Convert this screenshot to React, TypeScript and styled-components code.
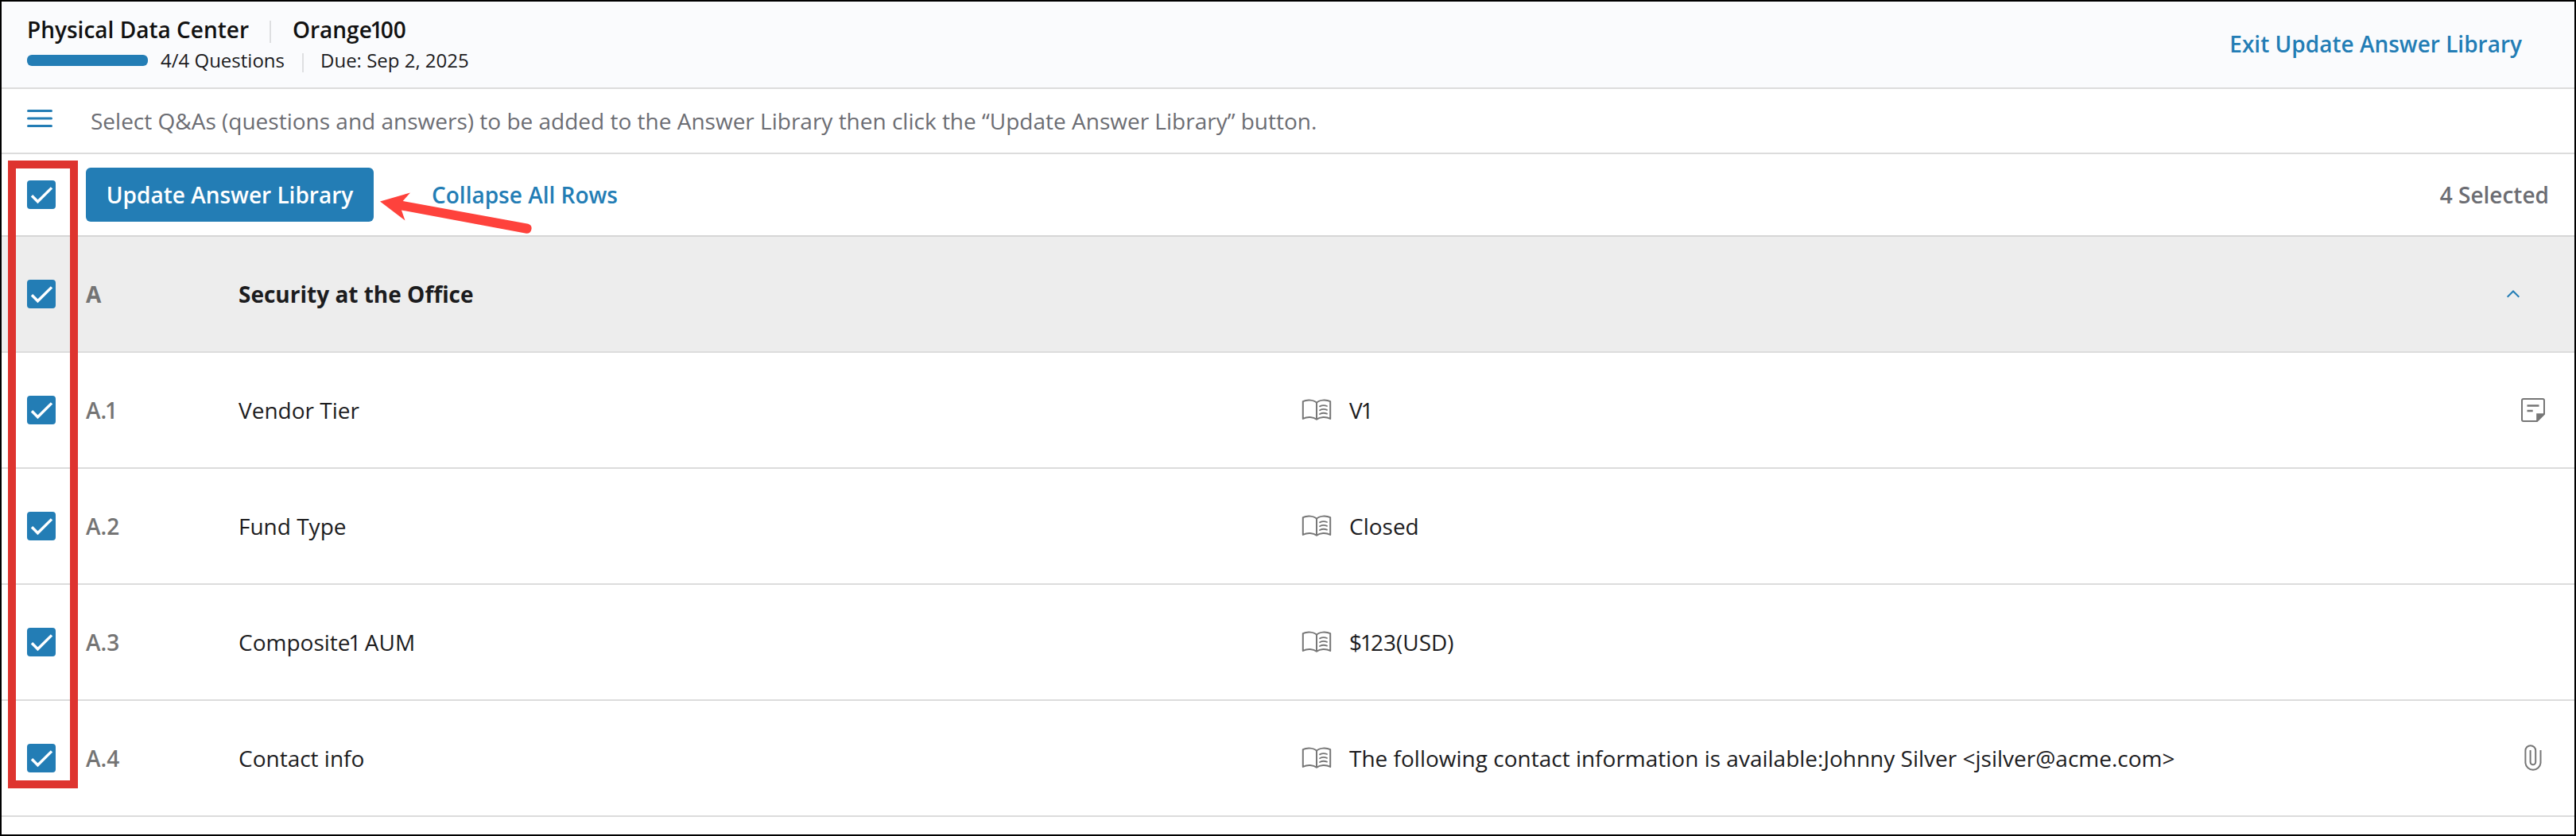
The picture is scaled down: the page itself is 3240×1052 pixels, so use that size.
import React from 'react';
import styled, { createGlobalStyle } from 'styled-components';

const BLUE = '#237db5';
const LINE = '#dcdcdc';

const GlobalStyle = createGlobalStyle`
  * { box-sizing: border-box; }
  body { margin: 0; background: #fff; }
`;

const Page = styled.div`
  position: relative;
  display: flex;
  flex-direction: column;
  width: 3240px;
  height: 1052px;
  overflow: hidden;
  border: 2px solid #000;
  background: #fff;
  color: #1c1c1e;
  font-family: 'Open Sans', 'Noto Sans', sans-serif;
  font-size: 28px;
  line-height: 38px;
  white-space: nowrap;
`;

const Header = styled.header`
  display: flex;
  justify-content: space-between;
  height: 110px;
  padding: 14px 66px 0 32px;
  border-bottom: 2px solid ${LINE};
  background: #fafbfd;
`;

const HeaderLine = styled.div<{ $size: number; $height: number }>`
  display: flex;
  align-items: center;
  height: ${(p) => p.$height}px;
  font-size: ${(p) => p.$size}px;
`;

const Title = styled.span`
  color: #111;
  font-weight: 600;
`;

const Divider = styled.span<{ $height: number; $left: number; $right: number }>`
  width: 2px;
  height: ${(p) => p.$height}px;
  margin: 5px ${(p) => p.$right}px 0 ${(p) => p.$left}px;
  background: #dedfe1;
`;

const Progress = styled.div`
  width: 152px;
  height: 14px;
  margin-right: 16px;
  border-radius: 6px;
  background: ${BLUE};
`;

const TextLink = styled.a`
  color: ${BLUE};
  font-weight: 600;
`;

const ExitLink = styled(TextLink)`
  margin-top: 20px;
`;

const HintBar = styled.div`
  display: flex;
  height: 82px;
  padding: 0 32px;
  border-bottom: 2px solid ${LINE};
  color: #6c6d73;
`;

const MenuIcon = styled.svg`
  margin: 25px 48px 0 0;
`;

const Hint = styled.p`
  margin: 21px 0 0;
`;

const Toolbar = styled.div`
  display: flex;
  align-items: center;
  height: 104px;
  padding: 0 32px;
  border-bottom: 2px solid #d6d6d6;
`;

const Box = styled.span`
  display: flex;
  flex: none;
  align-items: center;
  justify-content: center;
  width: 36px;
  height: 36px;
  margin-right: 38px;
  border-radius: 4px;
  background: ${BLUE};
`;

const PrimaryButton = styled.button`
  width: 362px;
  height: 68px;
  margin-right: 73px;
  padding: 0;
  border: 0;
  border-radius: 6px;
  background: ${BLUE};
  color: #fff;
  font: inherit;
  font-weight: 600;
`;

const Count = styled.span`
  margin-left: auto;
  color: #6c6d73;
  font-weight: 600;
`;

const Row = styled.div<{ $section?: boolean }>`
  display: grid;
  grid-template-columns: 74px 192px 1337px 1fr auto;
  align-items: center;
  height: 146px;
  padding: 0 ${(p) => (p.$section ? 69 : 37)}px 0 32px;
  border-bottom: 2px solid ${LINE};
  background: ${(p) => (p.$section ? '#ededed' : '#fff')};
  font-weight: ${(p) => (p.$section ? 700 : 400)};
`;

const Code = styled.span<{ $bold?: boolean }>`
  color: #747474;
  font-weight: ${(p) => (p.$bold ? 700 : 600)};
`;

const Answer = styled.span`
  display: flex;
  align-items: center;
  gap: 22px;
`;

/* The digit one is set with tight side bearings. */
const TightOne = styled.span`
  margin: 0 -0.1em 0 -0.08em;
`;

const Highlight = styled.div`
  position: absolute;
  left: 8px;
  top: 200px;
  width: 88px;
  height: 790px;
  border: 10px solid #de342f;
`;

const Pointer = styled.svg`
  position: absolute;
  left: 476px;
  top: 238px;
`;

const Tight = ({ text }: { text: string }) => (
  <span>
    {text.split(/(1)/).map((part, i) => (part === '1' ? <TightOne key={i}>1</TightOne> : part))}
  </span>
);

const Checkbox = () => (
  <Box role="checkbox" aria-checked="true">
    <svg width="36" height="36" viewBox="0 0 36 36" fill="none">
      <path d="M6 19.2L13.5 26.8L31 9.4" stroke="#fff" strokeWidth="3.4" />
    </svg>
  </Box>
);

const BookIcon = () => (
  <svg width="38" height="28" viewBox="0 0 38 28" fill="none" stroke="#767676" strokeWidth="2" strokeLinejoin="round" strokeLinecap="round">
    <path d="M19 5C16 1 7 0.6 1.8 3.2V25C7 22 15 22.4 19 25.8C23 22.4 31 22 36.2 25V3.2C31 0.6 22 1 19 5ZM19 5V25.6" />
    <path d="M23 9.4C26 7.8 29 7.8 32 9M23 14.2C26 12.6 29 12.6 32 13.8M23 19C26 17.4 29 17.4 32 18.6" strokeWidth="1.8" />
  </svg>
);

const NoteIcon = () => (
  <svg width="30" height="30" viewBox="0 0 30 30" fill="none">
    <path d="M3 1H27Q29 1 29 3V20L20 29H3Q1 29 1 27V3Q1 1 3 1Z" stroke="#767676" strokeWidth="2" />
    <path d="M19.2 19.2H29.5L19.2 29.5Z" fill="#767676" />
    <path d="M7.5 9.5H22.5M7.5 16H14.7" stroke="#767676" strokeWidth="2.4" />
  </svg>
);

const ClipWrap = styled.svg`
  margin-right: 4px;
`;

const ClipIcon = () => (
  <ClipWrap width="22" height="34" viewBox="0 0 22 34" fill="none" stroke="#767676" strokeWidth="2">
    <path d="M20.5 7V23.2A9.6 9.6 0 0 1 1.4 23.2V7.6A6.4 6.4 0 0 1 14.2 7.6V22A3.3 3.3 0 0 1 7.6 22V7" />
  </ClipWrap>
);

const Chevron = () => (
  <svg width="16" height="10" viewBox="0 0 16 10" fill="none">
    <path d="M0.7 8.7L8 1.5L15.3 8.7" stroke={BLUE} strokeWidth="2" />
  </svg>
);

const rows = [
  { code: 'A.1', question: 'Vendor Tier', answer: 'V1', icon: <NoteIcon /> },
  { code: 'A.2', question: 'Fund Type', answer: 'Closed' },
  { code: 'A.3', question: 'Composite1 AUM', answer: '$123(USD)' },
  {
    code: 'A.4',
    question: 'Contact info',
    answer: 'The following contact information is available:Johnny Silver <jsilver@acme.com>',
    icon: <ClipIcon />,
  },
];

export default function App() {
  return (
    <>
      <GlobalStyle />
      <Page>
        <Header>
          <div>
            <HeaderLine $size={28} $height={42}>
              <Title>Physical Data Center</Title>
              <Divider $height={28} $left={26} $right={27} />
              <Title>
                <Tight text="Orange100" />
              </Title>
            </HeaderLine>
            <HeaderLine $size={24} $height={36}>
              <Progress />
              <span>4/4 Questions</span>
              <Divider $height={24} $left={22} $right={21} />
              <span>Due: Sep 2, 2025</span>
            </HeaderLine>
          </div>
          <ExitLink>Exit Update Answer Library</ExitLink>
        </Header>
        <HintBar>
          <MenuIcon width="32" height="24" viewBox="0 0 32 24" fill="none">
            <path d="M1.5 2.5H30.5M1.5 12H30.5M1.5 21.5H30.5" stroke={BLUE} strokeWidth="3" strokeLinecap="round" />
          </MenuIcon>
          <Hint>
            Select Q&amp;As (questions and answers) to be added to the Answer Library then click the “Update Answer Library” button.
          </Hint>
        </HintBar>
        <Toolbar>
          <Checkbox />
          <PrimaryButton>Update Answer Library</PrimaryButton>
          <TextLink>Collapse All Rows</TextLink>
          <Count>4 Selected</Count>
        </Toolbar>
        <Row $section>
          <Checkbox />
          <Code $bold>A</Code>
          <span>Security at the Office</span>
          <span />
          <Chevron />
        </Row>
        {rows.map((row) => (
          <Row key={row.code}>
            <Checkbox />
            <Code>
              <Tight text={row.code} />
            </Code>
            <Tight text={row.question} />
            <Answer>
              <BookIcon />
              <Tight text={row.answer} />
            </Answer>
            {row.icon}
          </Row>
        ))}
        <Highlight />
        <Pointer width="200" height="60" viewBox="0 0 200 60" fill="#fe423c">
          <path d="M0 13.5L38 2.5L28.7 13L186.5 41.8A6.2 6.2 0 0 1 184 53.8L27 24.5L31.5 37.5Z" />
        </Pointer>
      </Page>
    </>
  );
}
